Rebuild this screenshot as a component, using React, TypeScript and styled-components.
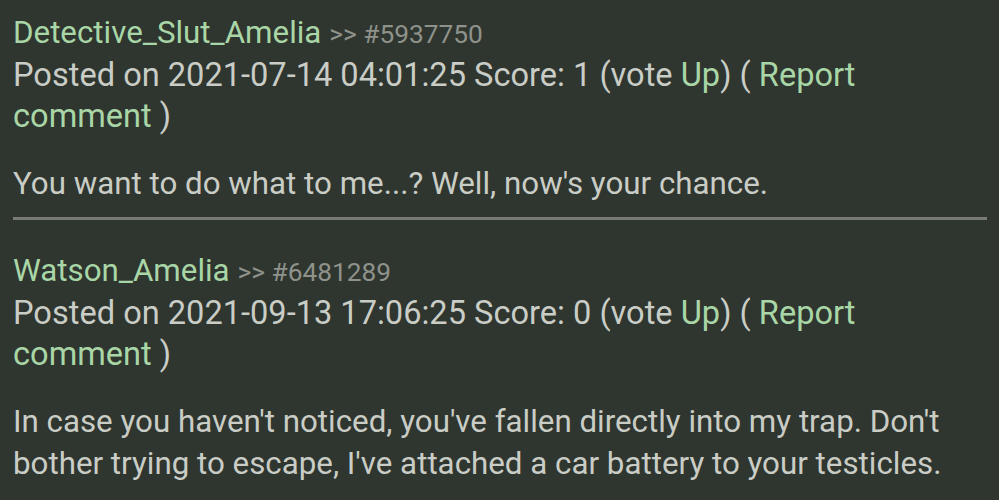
import React from "react";
import styled, { createGlobalStyle } from "styled-components";

const Global = createGlobalStyle`
  html, body { margin: 0; padding: 0; background: #2f352f; }
  body { font-family: Roboto, "Noto Sans", "Liberation Sans", sans-serif; }
`;

const Page = styled.div`
  width: 999px;
  height: 500px;
  overflow: hidden;
  background: #2f352f;
  padding: 12px 12px 0 13px;
  box-sizing: border-box;
`;

const Comment = styled.section`
  display: flex;
  flex-direction: column;
`;

const NameLine = styled.div`
  font-size: 31.3px;
  line-height: 41px;
  color: #a9d6a6;
  white-space: nowrap;
`;

const Ref = styled.span`
  color: #8e928b;
  font-size: 26.3px;
`;

const Meta = styled.div`
  font-size: 32.6px;
  line-height: 41px;
  color: #c9cdc6;
`;

const Link = styled.span`
  color: #a9d6a6;
`;

const Body = styled.p`
  margin: 26px 0 0 0;
  font-size: 31.3px;
  line-height: 42px;
  color: #c9cdc6;
`;

const Divider = styled.hr`
  border: none;
  height: 3px;
  background: #777b74;
  margin: 12px 0 30px 0;
`;

type Data = { author: string; id: string; date: string; score: number; text: string };

const comments: Data[] = [
  {
    author: "Detective_Slut_Amelia",
    id: "5937750",
    date: "2021-07-14 04:01:25",
    score: 1,
    text: "You want to do what to me...? Well, now's your chance.",
  },
  {
    author: "Watson_Amelia",
    id: "6481289",
    date: "2021-09-13 17:06:25",
    score: 0,
    text:
      "In case you haven't noticed, you've fallen directly into my trap. Don't bother trying to escape, I've attached a car battery to your testicles.",
  },
];

export default function App() {
  return (
    <>
      <Global />
      <Page>
        {comments.map((c, i) => (
          <React.Fragment key={c.id}>
            {i > 0 && <Divider />}
            <Comment>
              <NameLine>
                {c.author} <Ref>&gt;&gt; #{c.id}</Ref>
              </NameLine>
              <Meta>
                Posted on {c.date} Score: {c.score} (vote <Link>Up</Link>) ({" "}
                <Link>Report comment</Link> )
              </Meta>
              <Body>{c.text}</Body>
            </Comment>
          </React.Fragment>
        ))}
      </Page>
    </>
  );
}
